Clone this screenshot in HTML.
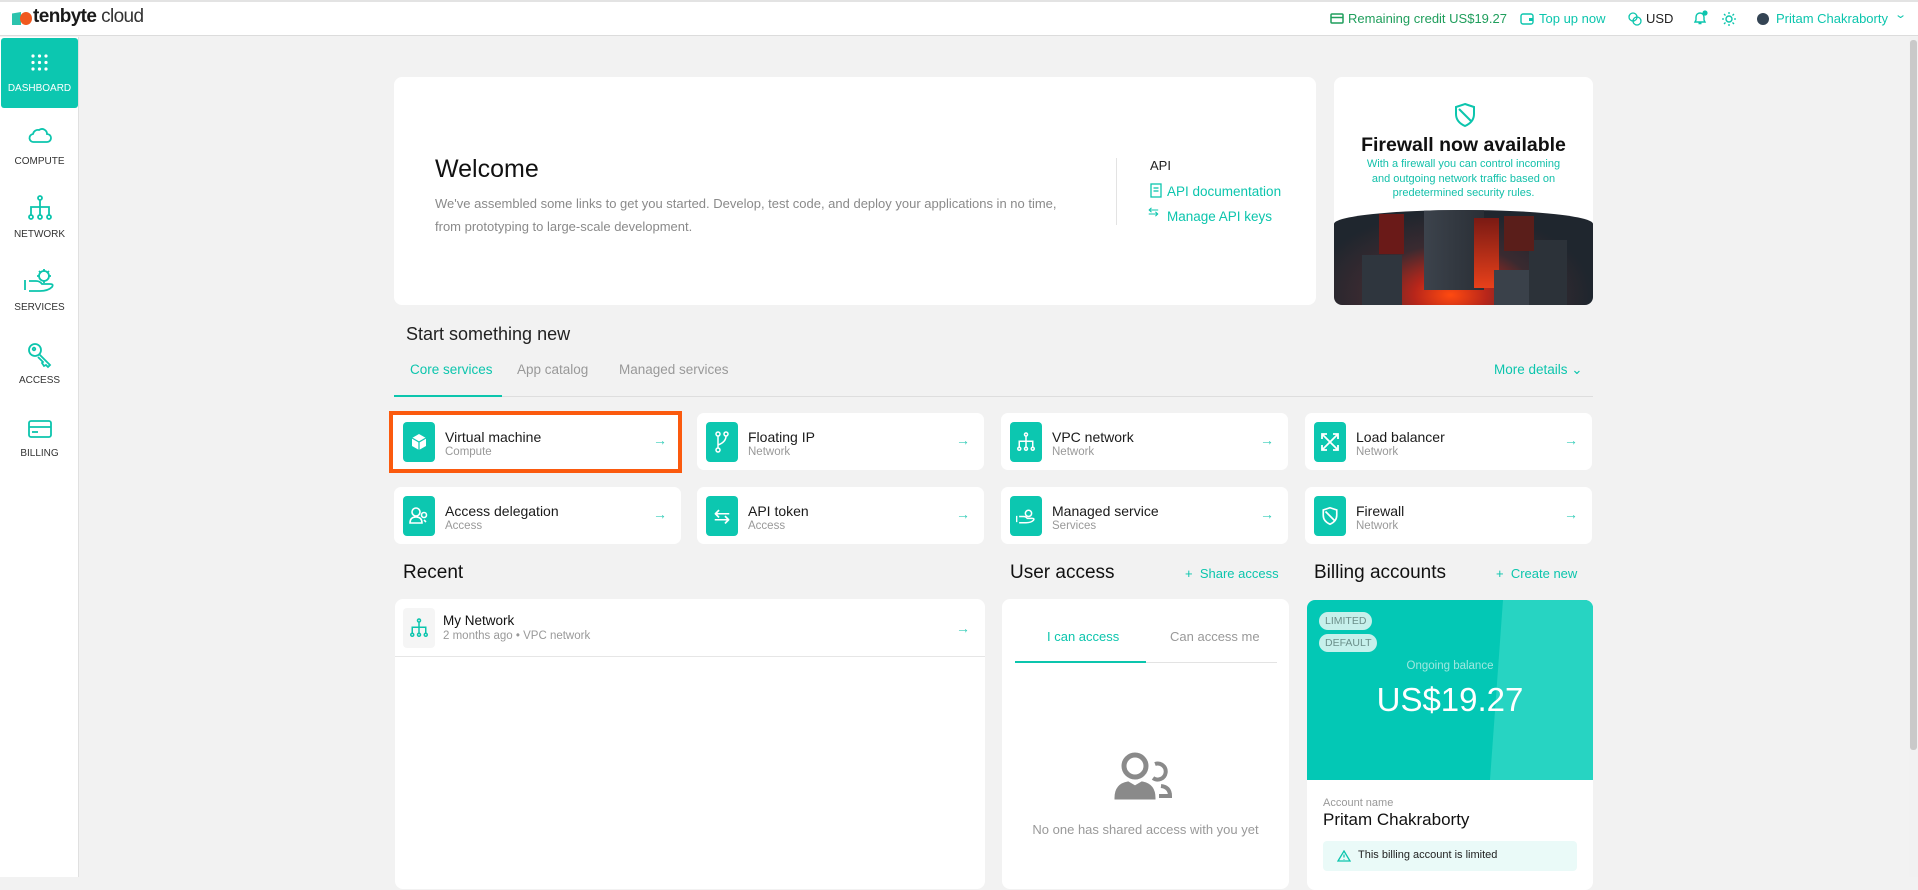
<!DOCTYPE html>
<html><head><meta charset="utf-8"><style>
*{box-sizing:border-box;margin:0;padding:0}
body{width:1918px;height:877px;overflow:hidden;background:#f2f2f2;font-family:"Liberation Sans",sans-serif;color:#1a1a1a;position:relative}
.a{position:absolute}
.teal{color:#0cc5ad}
.card{position:absolute;background:#fff;border-radius:8px}
.svc{position:absolute;background:#fff;border-radius:7px;width:287px;height:57px}
.svc .ic{position:absolute;left:9px;top:9px;width:32px;height:40px;background:#0cc7b0;border-radius:4px;display:flex;align-items:center;justify-content:center}
.svc .t{position:absolute;left:51px;top:16px;font-size:14px;color:#1a1a1a}
.svc .s{position:absolute;left:51px;top:33px;font-size:11.5px;color:#999}
.svc .ar{position:absolute;right:14px;top:19px;color:#35cdb9;font-size:14px}
.side{position:absolute;left:0;width:79px;text-align:center;font-size:10px;color:#333}
</style></head><body>
<!-- header -->
<div class="a" style="left:0;top:0;width:1918px;height:2px;background:#e3e3e3"></div>
<div class="a" style="left:0;top:2px;width:1918px;height:34px;background:#fff;border-bottom:1px solid #dcdcdc"></div>
<div class="a" style="left:12px;top:12px;width:9px;height:13px;background:#2cc3ad;clip-path:polygon(0 12%,100% 0,100% 100%,0 100%)"></div>
<div class="a" style="left:20px;top:12px;width:12px;height:13px;border-radius:50%;background:#f0591f"></div>
<div class="a" style="left:33px;top:6px;font-size:19px;letter-spacing:-0.6px"><b>tenbyte</b> <span style="color:#333">cloud</span></div>

<svg class="a" style="left:1330px;top:13px" width="14" height="11" viewBox="0 0 14 11"><rect x="1" y="1" width="12" height="9" rx="1" fill="none" stroke="#1f9e5c" stroke-width="1.5"/><line x1="1" y1="4.5" x2="13" y2="4.5" stroke="#1f9e5c" stroke-width="1.5"/></svg>
<div class="a" style="left:1348px;top:11px;font-size:13px;color:#1f9e5c">Remaining credit US$19.27</div>
<svg class="a" style="left:1520px;top:12px" width="14" height="13" viewBox="0 0 14 13"><rect x="1" y="2" width="12" height="10" rx="2" fill="none" stroke="#0cc5ad" stroke-width="1.4"/><rect x="9" y="6" width="4" height="3" fill="#0cc5ad"/></svg>
<div class="a teal" style="left:1539px;top:11px;font-size:13px">Top up now</div>
<svg class="a" style="left:1628px;top:12px" width="14" height="14" viewBox="0 0 14 14"><circle cx="5" cy="5" r="4" fill="none" stroke="#0cc5ad" stroke-width="1.3"/><circle cx="9" cy="9" r="4" fill="none" stroke="#0cc5ad" stroke-width="1.3"/></svg>
<div class="a" style="left:1646px;top:11px;font-size:13px;color:#222">USD</div>
<svg class="a" style="left:1692px;top:10px" width="16" height="16" viewBox="0 0 16 16"><path d="M3 12 L4 10 V7 A4 4 0 0 1 12 7 V10 L13 12 Z M6.5 13.5 h3" fill="none" stroke="#0cc5ad" stroke-width="1.4"/><circle cx="13" cy="3" r="2.6" fill="#0cc5ad"/></svg>
<svg class="a" style="left:1722px;top:12px" width="14" height="14" viewBox="0 0 14 14"><circle cx="7" cy="7" r="3" fill="none" stroke="#0cc5ad" stroke-width="1.4"/><g stroke="#0cc5ad" stroke-width="1.3"><line x1="7" y1="0" x2="7" y2="2"/><line x1="7" y1="12" x2="7" y2="14"/><line x1="0" y1="7" x2="2" y2="7"/><line x1="12" y1="7" x2="14" y2="7"/><line x1="2" y1="2" x2="3.5" y2="3.5"/><line x1="12" y1="12" x2="10.5" y2="10.5"/><line x1="12" y1="2" x2="10.5" y2="3.5"/><line x1="2" y1="12" x2="3.5" y2="10.5"/></g></svg>
<div class="a" style="left:1757px;top:13px;width:12px;height:12px;border-radius:50%;background:#344454"></div>
<div class="a teal" style="left:1776px;top:11px;font-size:13px">Pritam Chakraborty</div>
<div class="a teal" style="left:1896px;top:8px;font-size:11px;transform:scaleX(1.4)">⌄</div>

<!-- scrollbar -->
<div class="a" style="left:1909px;top:37px;width:9px;height:840px;background:#f1f1f1"></div>
<div class="a" style="left:1910px;top:40px;width:7px;height:710px;background:#c9c9c9;border-radius:3px"></div>

<!-- sidebar -->
<div class="a" style="left:0;top:37px;width:79px;height:840px;background:#fff;border-right:1px solid #e0e0e0"></div>
<div class="a" style="left:1px;top:38px;width:77px;height:70px;background:#0cc7b0;border-radius:3px"></div>
<svg class="a" style="left:31px;top:54px" width="17" height="17"><g fill="#fff"><circle cx="2" cy="2" r="1.6"/><circle cx="8.5" cy="2" r="1.6"/><circle cx="15" cy="2" r="1.6"/><circle cx="2" cy="8.5" r="1.6"/><circle cx="8.5" cy="8.5" r="1.6"/><circle cx="15" cy="8.5" r="1.6"/><circle cx="2" cy="15" r="1.6"/><circle cx="8.5" cy="15" r="1.6"/><circle cx="15" cy="15" r="1.6"/></g></svg>
<div class="side" style="top:83px;color:#fff">DASHBOARD</div>
<svg class="a" style="left:28px;top:126px" width="24" height="18" viewBox="0 0 24 18"><path d="M6 16 H19 A4 4 0 0 0 19 8 A5 5 0 0 0 11 4 A5 5 0 0 0 5 8 A4 4 0 0 0 6 16 Z" fill="none" stroke="#0cc5ad" stroke-width="1.8"/></svg>
<div class="side" style="top:156px">COMPUTE</div>
<svg class="a" style="left:28px;top:195px" width="24" height="26" viewBox="0 0 24 26"><g fill="none" stroke="#0cc5ad" stroke-width="1.8"><circle cx="12" cy="3" r="2"/><line x1="12" y1="5" x2="12" y2="20"/><path d="M3 20 V12 H21 V20"/><circle cx="3" cy="22" r="2"/><circle cx="12" cy="22" r="2"/><circle cx="21" cy="22" r="2"/></g></svg>
<div class="side" style="top:229px">NETWORK</div>
<svg class="a" style="left:24px;top:268px" width="32" height="26" viewBox="0 0 32 26"><g fill="none" stroke="#0cc5ad" stroke-width="1.8"><path d="M1 12 V22"/><path d="M5 13 H12 Q16 13 18 16 H26 Q30 16 28 19 Q24 23 16 23 H5"/><circle cx="20" cy="8" r="5"/><path d="M20 1 v2 M20 13 v2 M13 8 h2 M25 8 h2 M15 3 l1.5 1.5 M25 3 l-1.5 1.5"/></g></svg>
<div class="side" style="top:302px">SERVICES</div>
<svg class="a" style="left:28px;top:343px" width="24" height="26" viewBox="0 0 24 26"><g fill="none" stroke="#0cc5ad" stroke-width="1.8"><circle cx="7" cy="7" r="6"/><circle cx="6" cy="6" r="1.3"/><path d="M11 11 L22 22 L20 24 L18 22 L16 23 L14 20 L15 19 L10 14"/></g></svg>
<div class="side" style="top:375px">ACCESS</div>
<svg class="a" style="left:28px;top:420px" width="24" height="18" viewBox="0 0 24 18"><g fill="none" stroke="#0cc5ad" stroke-width="1.8"><rect x="1" y="1" width="22" height="16" rx="2"/><line x1="1" y1="7" x2="23" y2="7"/><line x1="4" y1="12" x2="10" y2="12"/></g></svg>
<div class="side" style="top:448px">BILLING</div>

<!-- welcome card -->
<div class="card" style="left:394px;top:77px;width:922px;height:228px"></div>
<div class="a" style="left:435px;top:155px;font-size:25px;color:#111">Welcome</div>
<div class="a" style="left:435px;top:192px;font-size:13px;color:#8a8a8a;line-height:23px;width:650px">We've assembled some links to get you started. Develop, test code, and deploy your applications in no time, from prototyping to large-scale development.</div>
<div class="a" style="left:1116px;top:158px;width:1px;height:67px;background:#e3e3e3"></div>
<div class="a" style="left:1150px;top:158px;font-size:13px;color:#222">API</div>
<svg class="a" style="left:1150px;top:183px" width="12" height="15" viewBox="0 0 12 15"><g fill="none" stroke="#0cc5ad" stroke-width="1.3"><rect x="1" y="1" width="10" height="13"/><line x1="3.5" y1="5" x2="8.5" y2="5"/><line x1="3.5" y1="8" x2="8.5" y2="8"/></g></svg>
<div class="a teal" style="left:1167px;top:184px;font-size:13.5px">API documentation</div>
<div class="a teal" style="left:1148px;top:204px;font-size:13px">⇆</div>
<div class="a teal" style="left:1167px;top:209px;font-size:13.5px">Manage API keys</div>

<!-- firewall card -->
<div class="card" style="left:1334px;top:77px;width:259px;height:228px;overflow:hidden">
<svg class="a" style="left:119px;top:25px" width="24" height="26" viewBox="0 0 24 26"><g fill="none" stroke="#0cc5ad" stroke-width="2"><path d="M12 2 L21 5 V12 Q21 20 12 24 Q3 20 3 12 V5 Z"/><line x1="6" y1="7" x2="18" y2="19"/></g></svg>
<div class="a" style="left:0;width:259px;top:57px;text-align:center;font-size:19.5px;font-weight:bold;color:#111">Firewall now available</div>
<div class="a" style="left:28px;width:203px;top:80px;text-align:center;font-size:11px;line-height:14.5px;color:#14c0aa">With a firewall you can control incoming and outgoing network traffic based on predetermined security rules.</div>
<div class="a" style="left:0;top:133px;width:259px;height:100px;border-radius:50% 50% 0 0/14px 14px 0 0;background:radial-gradient(ellipse at 45% 85%,#ff4a10 0%,#b8261a 18%,#3a2a30 42%,#1f262e 70%),#222;overflow:hidden">
<div class="a" style="left:90px;top:0;width:60px;height:80px;background:linear-gradient(90deg,#3c434c,#2a2f36);"></div>
<div class="a" style="left:140px;top:8px;width:25px;height:70px;background:linear-gradient(#7a1a14,#e8401a)"></div>
<div class="a" style="left:28px;top:45px;width:40px;height:55px;background:#2f363e"></div>
<div class="a" style="left:160px;top:60px;width:40px;height:40px;background:#3a414a"></div>
<div class="a" style="left:195px;top:30px;width:38px;height:70px;background:#2c3239"></div>
<div class="a" style="left:45px;top:4px;width:25px;height:40px;background:#6a1a18"></div>
<div class="a" style="left:170px;top:6px;width:30px;height:35px;background:#5a1e1a"></div>
</div>
</div>

<!-- start something new -->
<div class="a" style="left:406px;top:324px;font-size:18px;color:#222">Start something new</div>
<div class="a teal" style="left:410px;top:362px;font-size:13.5px">Core services</div>
<div class="a" style="left:517px;top:362px;font-size:13.5px;color:#999">App catalog</div>
<div class="a" style="left:619px;top:362px;font-size:13.5px;color:#999">Managed services</div>
<div class="a teal" style="left:1494px;top:362px;font-size:13.5px">More details ⌄</div>
<div class="a" style="left:394px;top:396px;width:1199px;height:1px;background:#dedede"></div>
<div class="a" style="left:394px;top:395px;width:108px;height:2px;background:#0cc5ad"></div>

<!-- service cards -->
<div class="a" style="left:389px;top:411px;width:293px;height:62px;border:4px solid #fb5a0e;background:#fff"></div>
<div class="svc" style="left:394px;top:413px;background:transparent"><div class="ic"><svg width="18" height="18" viewBox="0 0 18 18"><path d="M9 1 L16 5 V13 L9 17 L2 13 V5 Z" fill="#fff"/><path d="M2 5 L9 9 L16 5 M9 9 V17" fill="none" stroke="#0cc7b0" stroke-width="1.2"/></svg></div><div class="t">Virtual machine</div><div class="s">Compute</div><div class="ar">→</div></div>
<div class="svc" style="left:697px;top:413px"><div class="ic"><svg width="14" height="22" viewBox="0 0 14 22"><g fill="none" stroke="#fff" stroke-width="1.5"><circle cx="3" cy="3" r="2"/><circle cx="11" cy="3" r="2"/><circle cx="3" cy="19" r="2"/><path d="M3 5 V17 M11 5 Q11 11 3 14"/></g></svg></div><div class="t">Floating IP</div><div class="s">Network</div><div class="ar">→</div></div>
<div class="svc" style="left:1001px;top:413px"><div class="ic"><svg width="18" height="20" viewBox="0 0 24 26"><g fill="none" stroke="#fff" stroke-width="2"><circle cx="12" cy="3" r="2"/><line x1="12" y1="5" x2="12" y2="20"/><path d="M3 20 V12 H21 V20"/><circle cx="3" cy="22" r="2"/><circle cx="12" cy="22" r="2"/><circle cx="21" cy="22" r="2"/></g></svg></div><div class="t">VPC network</div><div class="s">Network</div><div class="ar">→</div></div>
<div class="svc" style="left:1305px;top:413px"><div class="ic"><svg width="20" height="20" viewBox="0 0 20 20"><g fill="none" stroke="#fff" stroke-width="1.8"><path d="M2 2 L18 18 M18 2 L2 18 M2 7 V2 H7 M13 2 H18 V7 M18 13 V18 H13 M7 18 H2 V13"/></g></svg></div><div class="t">Load balancer</div><div class="s">Network</div><div class="ar">→</div></div>

<div class="svc" style="left:394px;top:487px"><div class="ic"><svg width="20" height="18" viewBox="0 0 20 18"><g fill="none" stroke="#fff" stroke-width="1.6"><circle cx="7" cy="5" r="4"/><path d="M1 16 Q1 10 7 10 Q13 10 13 16 Z"/><circle cx="15" cy="8" r="2.5"/><path d="M15 13 l2 2"/></g></svg></div><div class="t">Access delegation</div><div class="s">Access</div><div class="ar">→</div></div>
<div class="svc" style="left:697px;top:487px"><div class="ic" style="color:#fff;font-size:20px">⇆</div><div class="t">API token</div><div class="s">Access</div><div class="ar">→</div></div>
<div class="svc" style="left:1001px;top:487px"><div class="ic"><svg width="20" height="17" viewBox="0 0 32 26"><g fill="none" stroke="#fff" stroke-width="2.4"><path d="M1 12 V22"/><path d="M5 13 H12 Q16 13 18 16 H26 Q30 16 28 19 Q24 23 16 23 H5"/><circle cx="20" cy="8" r="5"/></g></svg></div><div class="t">Managed service</div><div class="s">Services</div><div class="ar">→</div></div>
<div class="svc" style="left:1305px;top:487px"><div class="ic"><svg width="18" height="20" viewBox="0 0 24 26"><g fill="none" stroke="#fff" stroke-width="2.2"><path d="M12 2 L21 5 V12 Q21 20 12 24 Q3 20 3 12 V5 Z"/><line x1="6" y1="7" x2="18" y2="19"/></g></svg></div><div class="t">Firewall</div><div class="s">Network</div><div class="ar">→</div></div>

<!-- recent -->
<div class="a" style="left:403px;top:562px;font-size:19px;color:#111">Recent</div>
<div class="card" style="left:395px;top:599px;width:590px;height:290px"></div>
<div class="a" style="left:403px;top:608px;width:32px;height:40px;background:#f5f5f5;border-radius:4px"></div>
<svg class="a" style="left:410px;top:618px" width="18" height="20" viewBox="0 0 24 26"><g fill="none" stroke="#0cc5ad" stroke-width="2"><circle cx="12" cy="3" r="2"/><line x1="12" y1="5" x2="12" y2="20"/><path d="M3 20 V12 H21 V20"/><circle cx="3" cy="22" r="2"/><circle cx="12" cy="22" r="2"/><circle cx="21" cy="22" r="2"/></g></svg>
<div class="a" style="left:443px;top:613px;font-size:13.5px;color:#111">My Network</div>
<div class="a" style="left:443px;top:630px;font-size:11.5px;color:#999">2 months ago • VPC network</div>
<div class="a" style="left:956px;top:620px;color:#35cdb9;font-size:14px">→</div>
<div class="a" style="left:395px;top:656px;width:590px;height:1px;background:#e6e6e6"></div>

<!-- user access -->
<div class="a" style="left:1010px;top:562px;font-size:19px;color:#111">User access</div>
<div class="a teal" style="left:1185px;top:566px;font-size:13px">+&nbsp; Share access</div>
<div class="card" style="left:1002px;top:599px;width:287px;height:290px"></div>
<div class="a teal" style="left:1047px;top:629px;font-size:13px">I can access</div>
<div class="a" style="left:1170px;top:629px;font-size:13px;color:#999">Can access me</div>
<div class="a" style="left:1015px;top:662px;width:262px;height:1px;background:#e3e3e3"></div>
<div class="a" style="left:1015px;top:661px;width:131px;height:2px;background:#0cc5ad"></div>
<svg class="a" style="left:1113px;top:752px" width="66" height="52" viewBox="0 0 66 52"><g fill="none" stroke="#8a8a8a" stroke-width="5"><circle cx="22" cy="14" r="11"/><path d="M3 46 Q3 33 15 31 L22 35 L29 31 Q41 33 41 46 Z" fill="#8a8a8a" stroke-width="3"/><path d="M42 12 A8 8 0 1 1 40 26" stroke-width="4"/><path d="M48 34 Q57 35 57 44 H46" stroke-width="4"/></g></svg>
<div class="a" style="left:1002px;width:287px;top:822px;text-align:center;font-size:13px;color:#999">No one has shared access with you yet</div>

<!-- billing -->
<div class="a" style="left:1314px;top:562px;font-size:19px;color:#111">Billing accounts</div>
<div class="a teal" style="left:1496px;top:566px;font-size:13px">+&nbsp; Create new</div>
<div class="card" style="left:1307px;top:600px;width:286px;height:290px;overflow:hidden">
<div class="a" style="left:0;top:0;width:286px;height:180px;background:#03c8b5"></div>
<div class="a" style="left:0;top:0;width:286px;height:180px;background:#27d4c2;clip-path:polygon(196px 0,286px 0,286px 180px,183px 180px)"></div>
<div class="a" style="left:12px;top:12px;height:18px;padding:0 6px;border-radius:9px;background:#c6f0eb;color:#6b8f8a;font-size:10.5px;line-height:18px">LIMITED</div>
<div class="a" style="left:12px;top:34px;height:18px;padding:0 6px;border-radius:9px;background:#c6f0eb;color:#6b8f8a;font-size:10.5px;line-height:18px">DEFAULT</div>
<div class="a" style="left:0;width:286px;top:60px;text-align:center;font-size:11.5px;color:#9ee8df">Ongoing balance</div>
<div class="a" style="left:0;width:286px;top:81px;text-align:center;font-size:33px;color:#fff">US$19.27</div>
<div class="a" style="left:16px;top:197px;font-size:11px;color:#999">Account name</div>
<div class="a" style="left:16px;top:210px;font-size:17px;color:#111">Pritam Chakraborty</div>
<div class="a" style="left:16px;top:241px;width:254px;height:30px;background:#eafaf8;border-radius:4px"></div>
<svg class="a" style="left:30px;top:250px" width="14" height="12" viewBox="0 0 14 12"><path d="M7 1 L13 11 H1 Z M7 4.5 V7.5 M7 9 V9.6" fill="none" stroke="#0cc5ad" stroke-width="1.3"/></svg>
<div class="a" style="left:51px;top:249px;font-size:11px;color:#222">This billing account is limited</div>
</div>
</body></html>
